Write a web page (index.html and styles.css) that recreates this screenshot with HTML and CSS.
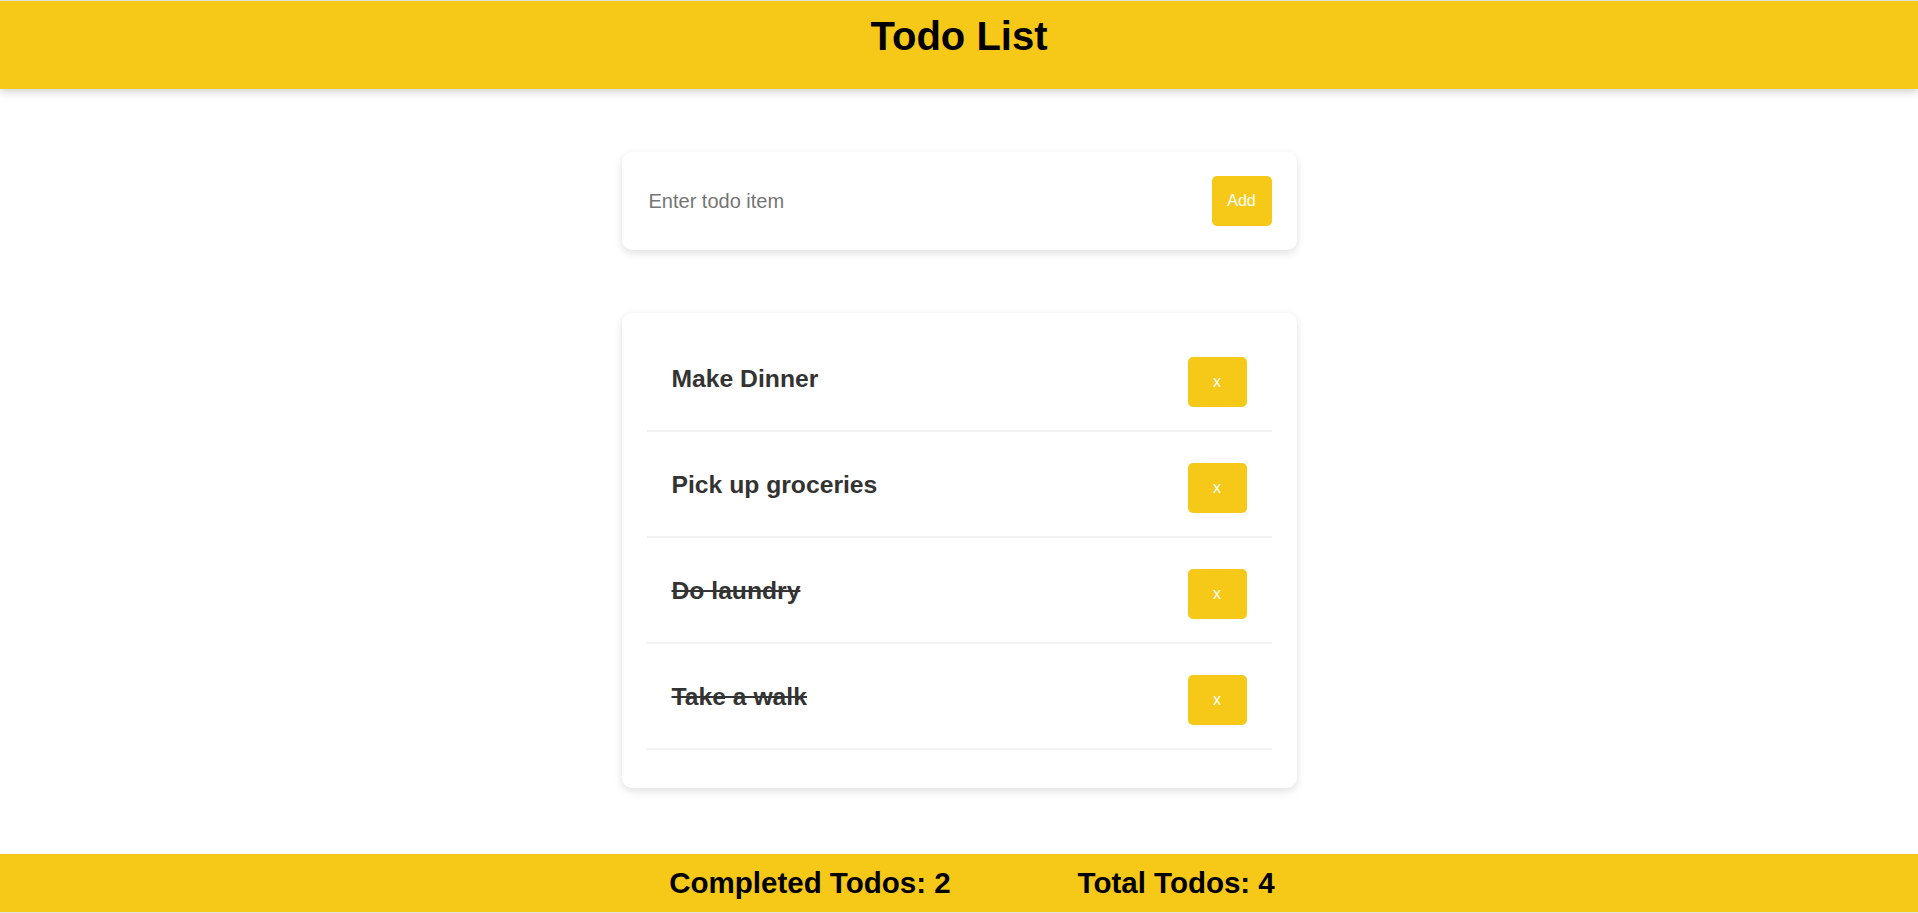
FILE: index.html
```html
<!DOCTYPE html>
<html lang="en">
<head>
<meta charset="utf-8">
<title>Todo List</title>
<link rel="stylesheet" href="styles.css">
</head>
<body>
<div class="page">
  <header class="topbar">
    <h1 class="title">Todo List</h1>
  </header>
  <main class="content">
    <form class="card add-card">
      <input class="todo-input" type="text" placeholder="Enter todo item">
      <button class="btn add-btn" type="button">Add</button>
    </form>
    <section class="card list-card">
      <ul class="todo-list">
        <li class="todo-item"><span class="todo-text">Make Dinner</span><button class="btn del-btn" type="button">x</button></li>
        <li class="todo-item"><span class="todo-text">Pick up groceries</span><button class="btn del-btn" type="button">x</button></li>
        <li class="todo-item done"><span class="todo-text">Do laundry</span><button class="btn del-btn" type="button">x</button></li>
        <li class="todo-item done"><span class="todo-text">Take a walk</span><button class="btn del-btn" type="button">x</button></li>
      </ul>
    </section>
  </main>
  <footer class="bottombar">
    <span class="stat">Completed Todos: 2</span>
    <span class="stat">Total Todos: 4</span>
  </footer>
</div>
</body>
</html>
```

FILE: styles.css
```css
* {
  box-sizing: border-box;
}

html, body {
  margin: 0;
  padding: 0;
  background: #ffffff;
  font-family: "Liberation Sans", Arial, sans-serif;
}

.page {
  min-height: 100vh;
  display: flex;
  flex-direction: column;
}

.topbar {
  background: #f6c918;
  border-top: 1px solid #e2e2e2;
  padding: 12px 0 30px;
  text-align: center;
  box-shadow: 0 3px 8px rgba(0, 0, 0, 0.18);
  position: relative;
  z-index: 1;
}

.title {
  margin: 0;
  font-size: 40px;
  font-weight: bold;
  color: #000;
  line-height: 46px;
}

.content {
  flex: 1;
  display: flex;
  flex-direction: column;
  align-items: center;
  gap: 63px;
  padding-top: 63px;
}

.card {
  width: 675px;
  background: #fff;
  border-radius: 10px;
  box-shadow: 0 3px 8px rgba(0, 0, 0, 0.13);
}

.add-card {
  margin: 0;
  display: flex;
  align-items: center;
  padding: 24px 25px 24px 24px;
}

.todo-input {
  flex: 1;
  border: none;
  outline: none;
  padding: 0 3px;
  font-family: "Liberation Sans", Arial, sans-serif;
  font-size: 20px;
  color: #333;
  background: transparent;
}

.todo-input::placeholder {
  color: #757575;
}

.btn {
  background: #f6c918;
  color: #fff;
  border: none;
  border-radius: 5px;
  font-family: "Liberation Sans", Arial, sans-serif;
  font-size: 16px;
  height: 50px;
  padding: 0;
  cursor: pointer;
}

.add-btn {
  width: 60px;
}

.del-btn {
  width: 59px;
}

.list-card {
  padding: 21px 25px 38px;
}

.todo-list {
  list-style: none;
  margin: 0;
  padding: 0;
}

.todo-item {
  display: flex;
  align-items: center;
  justify-content: space-between;
  padding: 23px 25px;
  border-bottom: 2px solid #f2f2f2;
}

.todo-item + .todo-item {
  margin-top: 8px;
}

.todo-text {
  font-size: 24.7px;
  font-weight: bold;
  color: #333;
  margin-bottom: 7px;
}

.done .todo-text {
  text-decoration: line-through;
}

.bottombar {
  background: #f6c918;
  height: 59px;
  border-bottom: 1px solid #e2e2e2;
  display: flex;
  align-items: center;
  justify-content: center;
  gap: 127px;
  padding-left: 26px;
}

.stat {
  font-size: 29.5px;
  font-weight: bold;
  color: #000;
}
```
